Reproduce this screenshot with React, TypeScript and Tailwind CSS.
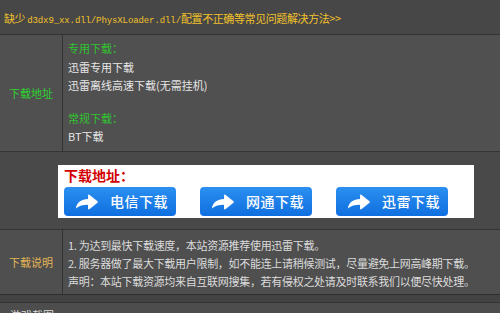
import React from 'react';

const cjk = "font-['SimSun','Noto_Sans_CJK_SC',sans-serif]";

const ArrowIcon: React.FC = () => (
    <svg width="24" height="18" viewBox="0 0 24 18" className="shrink-0">
        <path d="M1 15.5 C1.5 9.5 6.5 6 13 6 L13 1.5 Q14 1.5 15 2.3 L22.5 8.2 Q23.3 9 22.5 9.8 L15 15.7 Q14 16.5 13 16.5 L13 11.8 C8 11.8 4 12.8 1 15.5 Z" fill="#ffffff" />
    </svg>
);

const DownloadButton: React.FC<{ label: string }> = ({ label }) => (
    <div className="w-[112px] h-[29px] rounded-[4px] bg-gradient-to-b from-[#2b8ff0] to-[#0f6fe0] flex items-center pl-[11px] gap-[11px] text-white text-[14px] font-['Noto_Sans_CJK_SC',sans-serif] font-medium">
        <ArrowIcon />
        <span className="tracking-[0.5px]">{label}</span>
    </div>
);

export default function App() {
    return (
        <div className={`w-[500px] h-[313px] overflow-hidden bg-[#474747] ${cjk}`}>
            {/* header link */}
            <div className="h-[34px] pl-[4px] pt-[10px] text-[11px] leading-[16px] text-[#f2c12a] whitespace-nowrap tracking-[-0.4px]">
                <span>缺少</span>
                <span className="font-['Liberation_Mono',monospace] text-[9px] ml-[2px] tracking-[-0.1px]">d3dx9_xx.dll/PhysXLoader.dll/</span>
                <span>配置不正确等常见问题解决方法&gt;&gt;</span>
            </div>

            <div className="w-[520px] border-t border-[#333333]">
                {/* row 1 */}
                <div className="flex h-[117px] bg-[#505050] border-b border-[#353535]">
                    <div className="w-[63px] border-r border-[#333333] flex items-center justify-center text-[11px] text-[#2fd02f]">
                        下载地址
                    </div>
                    <div className="flex-1 pl-[5px] pt-[3px] text-[11px] text-[#e6e6e6]">
                        <div className="h-[20px] leading-[20px] text-[#2fc42f]">专用下载：</div>
                        <div className="h-[18px] leading-[18px]">迅雷专用下载</div>
                        <div className="h-[18px] leading-[18px]">迅雷离线高速下载(无需挂机)</div>
                        <div className="h-[15px]" />
                        <div className="h-[18px] leading-[18px] text-[#2fc42f]">常规下载：</div>
                        <div className="h-[18px] leading-[18px]">BT下载</div>
                    </div>
                </div>

                {/* row 2 */}
                <div className="h-[78px] bg-[#494949] border-b border-[#333333] pt-[13px] pl-[58px]">
                    <div className="w-[416px] h-[53px] bg-white pl-[6px]">
                        <div className="h-[20px] leading-[20px] text-[14px] font-bold text-[#d20000] font-['Noto_Sans_CJK_SC',sans-serif]">下载地址：</div>
                        <div className="flex gap-[24px] mt-[2px]">
                            <DownloadButton label="电信下载" />
                            <DownloadButton label="网通下载" />
                            <DownloadButton label="迅雷下载" />
                        </div>
                    </div>
                </div>

                {/* row 3 */}
                <div className="flex h-[65px] bg-[#4f4f4f] border-b border-[#2f2f2f]">
                    <div className="w-[63px] border-r border-[#333333] flex items-center justify-center text-[11px] text-[#e3b456]">
                        下载说明
                    </div>
                    <div className="flex-1 pl-[5px] pt-[6px] text-[11px] leading-[18px] text-[#dcdcdc] whitespace-nowrap tracking-[-0.3px]">
                        <div>1. 为达到最快下载速度，本站资源推荐使用迅雷下载。</div>
                        <div>2. 服务器做了最大下载用户限制，如不能连上请稍候测试，尽量避免上网高峰期下载。</div>
                        <div>声明：本站下载资源均来自互联网搜集，若有侵权之处请及时联系我们以便尽快处理。</div>
                    </div>
                </div>

                <div className="h-[8px] bg-[#434343] border-b border-[#333333]" />

                {/* row 4 */}
                <div className="h-[20px] bg-[#4d4d4d] pl-[10px] pt-[4px] text-[11px] leading-[16px] text-[#dcdcdc]">
                    游戏截图
                </div>
            </div>
        </div>
    );
}
